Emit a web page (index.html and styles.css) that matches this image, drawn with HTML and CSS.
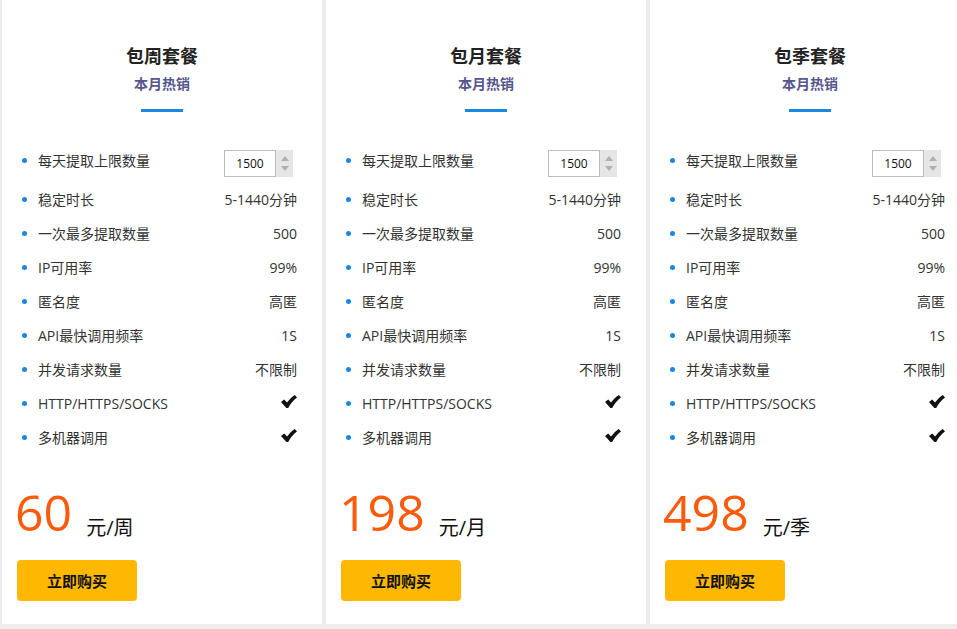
FILE: index.html
```html
<!DOCTYPE html>
<html lang="zh">
<head>
<meta charset="utf-8">
<title>套餐</title>
<link rel="stylesheet" href="styles.css">
</head>
<body>
<div class="cards">
  <div class="card">
    <div class="head">
      <h2 class="title">包周套餐</h2>
      <div class="sub">本月热销</div>
      <div class="bar"></div>
    </div>
    <ul class="list">
      <li class="row first"><span class="label">每天提取上限数量</span>
        <span class="num"><span class="box">1500</span><span class="spin"><i class="up"></i><i class="down"></i></span></span></li>
      <li class="row"><span class="label">稳定时长</span><span class="val">5-1440分钟</span></li>
      <li class="row"><span class="label">一次最多提取数量</span><span class="val">500</span></li>
      <li class="row"><span class="label">IP可用率</span><span class="val">99%</span></li>
      <li class="row"><span class="label">匿名度</span><span class="val">高匿</span></li>
      <li class="row"><span class="label">API最快调用频率</span><span class="val">1S</span></li>
      <li class="row"><span class="label">并发请求数量</span><span class="val">不限制</span></li>
      <li class="row"><span class="label">HTTP/HTTPS/SOCKS</span><svg class="check" viewBox="0 0 16 13"><path d="M0 7 L3.2 4.6 L6 7.6 C8.2 4.6 11 1.8 13.8 0 L16 2.4 C12.6 4.8 9.6 8.2 7.2 13 L5.4 13 Z"/></svg></li>
      <li class="row"><span class="label">多机器调用</span><svg class="check" viewBox="0 0 16 13"><path d="M0 7 L3.2 4.6 L6 7.6 C8.2 4.6 11 1.8 13.8 0 L16 2.4 C12.6 4.8 9.6 8.2 7.2 13 L5.4 13 Z"/></svg></li>
    </ul>
    <div class="price"><span class="amount">60</span><span class="unit">元/周</span></div>
    <button class="buy">立即购买</button>
  </div>

  <div class="card">
    <div class="head">
      <h2 class="title">包月套餐</h2>
      <div class="sub">本月热销</div>
      <div class="bar"></div>
    </div>
    <ul class="list">
      <li class="row first"><span class="label">每天提取上限数量</span>
        <span class="num"><span class="box">1500</span><span class="spin"><i class="up"></i><i class="down"></i></span></span></li>
      <li class="row"><span class="label">稳定时长</span><span class="val">5-1440分钟</span></li>
      <li class="row"><span class="label">一次最多提取数量</span><span class="val">500</span></li>
      <li class="row"><span class="label">IP可用率</span><span class="val">99%</span></li>
      <li class="row"><span class="label">匿名度</span><span class="val">高匿</span></li>
      <li class="row"><span class="label">API最快调用频率</span><span class="val">1S</span></li>
      <li class="row"><span class="label">并发请求数量</span><span class="val">不限制</span></li>
      <li class="row"><span class="label">HTTP/HTTPS/SOCKS</span><svg class="check" viewBox="0 0 16 13"><path d="M0 7 L3.2 4.6 L6 7.6 C8.2 4.6 11 1.8 13.8 0 L16 2.4 C12.6 4.8 9.6 8.2 7.2 13 L5.4 13 Z"/></svg></li>
      <li class="row"><span class="label">多机器调用</span><svg class="check" viewBox="0 0 16 13"><path d="M0 7 L3.2 4.6 L6 7.6 C8.2 4.6 11 1.8 13.8 0 L16 2.4 C12.6 4.8 9.6 8.2 7.2 13 L5.4 13 Z"/></svg></li>
    </ul>
    <div class="price"><span class="amount">198</span><span class="unit">元/月</span></div>
    <button class="buy">立即购买</button>
  </div>

  <div class="card">
    <div class="head">
      <h2 class="title">包季套餐</h2>
      <div class="sub">本月热销</div>
      <div class="bar"></div>
    </div>
    <ul class="list">
      <li class="row first"><span class="label">每天提取上限数量</span>
        <span class="num"><span class="box">1500</span><span class="spin"><i class="up"></i><i class="down"></i></span></span></li>
      <li class="row"><span class="label">稳定时长</span><span class="val">5-1440分钟</span></li>
      <li class="row"><span class="label">一次最多提取数量</span><span class="val">500</span></li>
      <li class="row"><span class="label">IP可用率</span><span class="val">99%</span></li>
      <li class="row"><span class="label">匿名度</span><span class="val">高匿</span></li>
      <li class="row"><span class="label">API最快调用频率</span><span class="val">1S</span></li>
      <li class="row"><span class="label">并发请求数量</span><span class="val">不限制</span></li>
      <li class="row"><span class="label">HTTP/HTTPS/SOCKS</span><svg class="check" viewBox="0 0 16 13"><path d="M0 7 L3.2 4.6 L6 7.6 C8.2 4.6 11 1.8 13.8 0 L16 2.4 C12.6 4.8 9.6 8.2 7.2 13 L5.4 13 Z"/></svg></li>
      <li class="row"><span class="label">多机器调用</span><svg class="check" viewBox="0 0 16 13"><path d="M0 7 L3.2 4.6 L6 7.6 C8.2 4.6 11 1.8 13.8 0 L16 2.4 C12.6 4.8 9.6 8.2 7.2 13 L5.4 13 Z"/></svg></li>
    </ul>
    <div class="price"><span class="amount">498</span><span class="unit">元/季</span></div>
    <button class="buy">立即购买</button>
  </div>
</div>
</body>
</html>
```

FILE: styles.css
```css
* { box-sizing: border-box; }
html, body {
  margin: 0;
  padding: 0;
  background: #ededed;
  overflow: hidden;
}
body {
  font-family: "Open Sans", "Noto Sans CJK SC", sans-serif;
  color: #333;
  width: 957px;
  height: 629px;
}
.cards {
  display: flex;
  gap: 4px;
  padding-left: 2px;
}
.card {
  flex: 0 0 320px;
  height: 624px;
  background: #fff;
  display: flex;
  flex-direction: column;
}
.head {
  display: flex;
  flex-direction: column;
  align-items: center;
  padding-top: 43px;
}
.title {
  margin: 0;
  font-size: 18px;
  line-height: 24px;
  font-weight: bold;
  color: #222;
  font-family: "Noto Sans CJK SC", sans-serif;
}
.sub {
  margin-top: 6px;
  font-size: 14px;
  line-height: 20px;
  font-weight: bold;
  color: #55578c;
  font-family: "Noto Sans CJK SC", sans-serif;
}
.bar {
  margin-top: 16px;
  width: 42px;
  height: 3px;
  background: #1a88e0;
}
.list {
  list-style: none;
  margin: 32px 0 0;
  padding: 0 25px 0 20px;
}
.row {
  display: flex;
  align-items: center;
  justify-content: space-between;
  height: 34px;
  font-size: 14px;
  color: #333;
}
.row.first { margin-bottom: 5px; }
.label {
  display: flex;
  align-items: center;
  gap: 11px;
  line-height: 20px;
}
.label::before {
  content: "";
  width: 5px;
  height: 5px;
  border-radius: 50%;
  background: #1a88e0;
  margin-top: -1px;
}
.val { line-height: 20px; }
.num {
  display: flex;
  height: 27px;
  margin-right: 4px;
  margin-top: 4px;
}
.box {
  width: 52px;
  border: 1px solid #bdbdbd;
  font-size: 12px;
  color: #111;
  display: flex;
  align-items: center;
  justify-content: center;
}
.spin {
  width: 17px;
  background: #e6e6e6;
  display: flex;
  flex-direction: column;
  align-items: center;
  justify-content: center;
  gap: 5px;
}
.spin i {
  display: block;
  width: 0;
  height: 0;
  border-left: 4px solid transparent;
  border-right: 4px solid transparent;
}
.spin .up { border-bottom: 5px solid #b0b0b0; }
.spin .down { border-top: 5px solid #b0b0b0; }
.check {
  width: 16px;
  height: 13px;
  margin-top: -6px;
  fill: #111;
}
.price {
  margin-top: 27px;
  padding-left: 13px;
  height: 60px;
  line-height: 60px;
  white-space: nowrap;
}
.amount {
  font-family: "Open Sans", sans-serif;
  font-size: 50px;
  color: #fb5b0c;
  vertical-align: baseline;
}
.unit {
  margin-left: 14px;
  font-size: 20px;
  line-height: 20px;
  color: #111;
  vertical-align: -4px;
}
.buy {
  margin: 18px 0 0 15px;
  width: 120px;
  height: 41px;
  border: none;
  border-radius: 4px;
  background: #ffb800;
  color: #111;
  font-family: "Noto Sans CJK SC", sans-serif;
  font-size: 15px;
  font-weight: bold;
  padding: 0;
}
```
